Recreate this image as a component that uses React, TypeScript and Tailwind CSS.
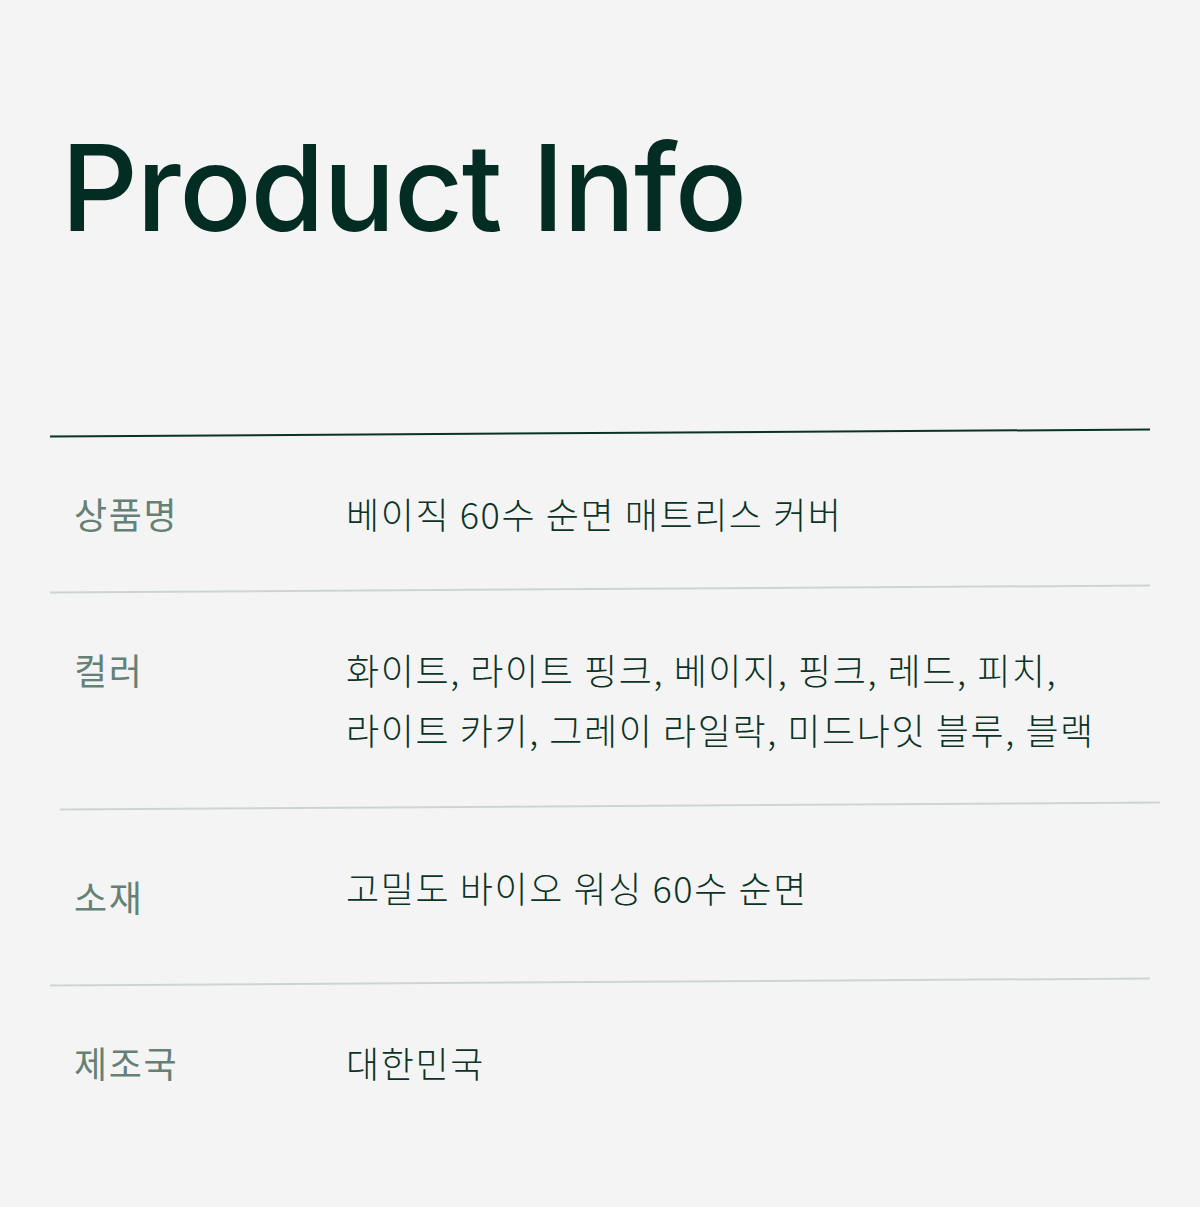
import React from 'react';

interface Row {
  label: string;
  lines: string[];
}

const rows: Row[] = [
  { label: '상품명', lines: ['베이직 60수 순면 매트리스 커버'] },
  {
    label: '컬러',
    lines: [
      '화이트, 라이트 핑크, 베이지, 핑크, 레드, 피치,',
      '라이트 카키, 그레이 라일락, 미드나잇 블루, 블랙',
    ],
  },
  { label: '소재', lines: ['고밀도 바이오 워싱 60수 순면'] },
  { label: '제조국', lines: ['대한민국'] },
];

const korean =
  "font-['Noto_Sans_CJK_KR','Noto_Sans',sans-serif] font-light tracking-[1.6px] text-[36px] leading-[60px]";

export default function App() {
  return (
    <div className="min-h-[1207px] bg-[#f4f4f4] px-[50px] pt-[118px]">
      {/* 제목 */}
      <h1 className="pl-[11px] font-['Inter',sans-serif] text-[120px] font-medium leading-[140px] tracking-[-1.4px] text-[#032c22]">
        Product Info
      </h1>

      <div className="mt-[174px] w-[1100px]">
        <div className="h-[2px] -rotate-[0.36deg] bg-[#0a3327]" />

        {/* 상품명 */}
        <div className={`grid grid-cols-[272px_1fr] pl-[24px] pt-[49px] pb-[45px] ${korean}`}>
          <div className="font-normal text-[#658176]">{rows[0].label}</div>
          <div className="text-[#0b3326]">{rows[0].lines[0]}</div>
        </div>
        <div className="h-[2px] -rotate-[0.36deg] bg-[#cdd5d1]" />

        {/* 컬러 */}
        <div className={`grid grid-cols-[272px_1fr] pl-[24px] pt-[49px] pb-[46px] ${korean}`}>
          <div className="font-normal text-[#658176]">{rows[1].label}</div>
          <div className="text-[#0b3326]">
            {rows[1].lines.map(l => (
              <div key={l} className="whitespace-nowrap">{l}</div>
            ))}
          </div>
        </div>
        <div className="ml-[10px] h-[2px] w-[1100px] -rotate-[0.36deg] bg-[#cdd5d1]" />

        {/* 소재 */}
        <div className={`grid grid-cols-[272px_1fr] pl-[24px] pt-[50px] pb-[55px] ${korean}`}>
          <div className="pt-[9px] font-normal text-[#658176]">{rows[2].label}</div>
          <div className="text-[#0b3326]">{rows[2].lines[0]}</div>
        </div>
        <div className="h-[2px] -rotate-[0.36deg] bg-[#cdd5d1]" />

        {/* 제조국 */}
        <div className={`grid grid-cols-[272px_1fr] pl-[24px] pt-[49px] pb-[40px] ${korean}`}>
          <div className="font-normal text-[#658176]">{rows[3].label}</div>
          <div className="text-[#0b3326]">{rows[3].lines[0]}</div>
        </div>
      </div>
    </div>
  );
}
